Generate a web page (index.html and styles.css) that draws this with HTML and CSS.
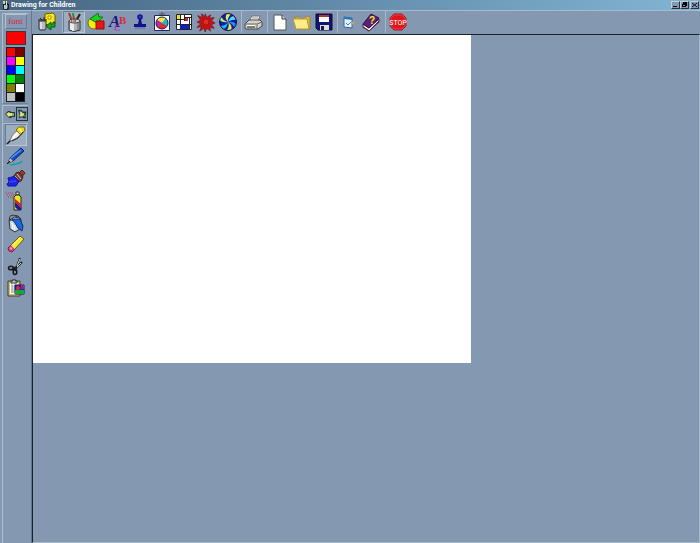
FILE: index.html
```html
<!DOCTYPE html>
<html lang="en">
<head>
<meta charset="utf-8">
<title>Drawing for Children</title>
<link rel="stylesheet" href="styles.css">
</head>
<body>
<div class="window">
  <header class="titlebar">
    <svg class="app-icon" viewBox="0 0 9 9"><path d="M2 2h6v6l-1 1H3L2 8z" fill="#1d2024"/><path d="M2 0h2v3H2z" fill="#d7cf83"/><path d="M5 0h1v4H5z" fill="#e0e8ee"/><path d="M7 1h1v2H7z" fill="#b94a3c"/><path d="M3 4h3v4H3z" fill="#b8c5c9"/><path d="M6 4h1v3H6z" fill="#536b75"/></svg>
    <h1 class="title">Drawing for Children</h1>
    <div class="window-buttons">
      <button class="win-btn" aria-label="Minimize"><svg viewBox="0 0 7 6"><path d="M1 4h4v1H1z"/></svg></button>
      <button class="win-btn" aria-label="Restore"><svg viewBox="0 0 7 6"><path d="M2 0h4v4H5V2H2zM1 2h4v3H1zM2 3v1h2V3z" fill-rule="evenodd"/></svg></button>
      <button class="win-btn close" aria-label="Close"><svg viewBox="0 0 7 6"><path d="M1 1l5 4M6 1L1 5" stroke="#111"/></svg></button>
    </div>
  </header>

  <aside class="sidebar">
    <div class="panel colour-panel">
      <button class="font-button">font</button>
      <button class="current-colour" aria-label="Current colour"></button>
      <div class="palette">
        <button class="swatch red" aria-label="Red"></button><button class="swatch maroon" aria-label="Maroon"></button>
        <button class="swatch magenta" aria-label="Magenta"></button><button class="swatch yellow" aria-label="Yellow"></button>
        <button class="swatch blue" aria-label="Blue"></button><button class="swatch cyan" aria-label="Cyan"></button>
        <button class="swatch lime" aria-label="Lime"></button><button class="swatch green" aria-label="Green"></button>
        <button class="swatch olive" aria-label="Olive"></button><button class="swatch white" aria-label="White"></button>
        <button class="swatch silver" aria-label="Silver"></button><button class="swatch black" aria-label="Black"></button>
      </div>
    </div>
    <div class="panel mode-panel">
      <button class="mode" aria-label="Previous"><svg viewBox="0 0 12 14"><path d="M1 7l3-3h2l1 1h4v5H8l-1 1H5z" fill="#1d3a34"/><path d="M2 7l3-2 1 1h3v3H6L5 10z" fill="#dfe08a"/><path d="M8 6h2v3H8z" fill="#8fae52"/></svg></button>
      <button class="mode selected" aria-label="Next"><svg viewBox="0 0 12 14"><path d="M1 2h4l2 2h4v3l-1 2 1 3H8l-2-1-4 1 1-4z" fill="#1d3a34"/><path d="M3 4h2l2 2h2l-1 3-2 1-3 0 1-3z" fill="#dfe08a"/><path d="M7 8h2v3z" fill="#8fae52"/></svg></button>
    </div>
    <div class="panel tools-panel">
      <button class="draw-tool active" aria-label="Pen"><svg viewBox="0 0 20 20"><path d="M1 19l6-6" stroke="#171717" stroke-width="1.500"/><path d="M4 15l3-6 5-4 3 4-4 4-6 3z" fill="#e9e9df" stroke="#777"/><path d="M7 13l5-6" stroke="#fff" stroke-width="2"/><path d="M10 5l3-3 5 0 1 3-4 5z" fill="#edd719" stroke="#776c12"/><path d="M13 3l3 4" stroke="#fff378" stroke-width="1.500"/><path d="M6 16l6-3 5-6" stroke="#222" fill="none"/></svg></button>
      <button class="draw-tool" aria-label="Pencil"><svg viewBox="0 0 20 20"><path d="M2 16l2-5L15 1l3 3L7 14z" fill="#164fc4" stroke="#10236c"/><path d="M5 11L15 3" stroke="#48a1ee" stroke-width="1.500"/><path d="M2 16l2-5 3 3z" fill="#d5bd86"/><path d="M1 17l3-3" stroke="#111"/><path d="M3 17q3 2 5 0 3 1 4-1 2 1 4-2" fill="none" stroke="#169fb6" stroke-width="1.500"/></svg></button>
      <button class="draw-tool" aria-label="Brush"><svg viewBox="0 0 20 20"><path d="M12 5l4-4 3 3-4 5z" fill="#a43623" stroke="#472222"/><path d="M8 7l2-3 3-1 4 5-2 4-3 1z" fill="#7c3b33" stroke="#30231e"/><path d="M9 7l4 5M11 5l4 5" stroke="#ddc8a7"/><path d="M6 8l2-1 5 5-3 5H2l-1-2 2-2-1-4z" fill="#1c25de" stroke="#1014ac"/><path d="M3 13l7-1" stroke="#303cff" stroke-width="2"/></svg></button>
      <button class="draw-tool" aria-label="Spray"><svg viewBox="0 0 20 20"><path d="M0 2h8M1 4h7M2 6h5" stroke="#d0334a" stroke-dasharray="1 1"/><path d="M10 1h3v3h-3z" fill="#ddd" stroke="#333"/><path d="M8 6l2-2h3l2 2v13H8z" fill="#f1e425" stroke="#222"/><path d="M9 8l6 5v4l-6-6z" fill="#df1b29"/><path d="M9 11l6 6v2h-3l-3-3z" fill="#1718a7"/></svg></button>
      <button class="draw-tool" aria-label="Fill"><svg viewBox="0 0 20 20"><path d="M3 7l9-4 3 3-1 10-5 3-5-3z" fill="#c8d7dc" stroke="#333"/><path d="M4 7l4-3 6 1-2 3z" fill="#eee" stroke="#333"/><path d="M6 6h8l3 7-1 5-4-3-3-5z" fill="#1a67dc" stroke="#152b7c"/><path d="M4 8Q1 0 12 3" fill="none" stroke="#333"/><path d="M6 10l1 6M8 12l1 5" stroke="#fff"/></svg></button>
      <button class="draw-tool" aria-label="Eraser"><svg viewBox="0 0 20 20"><path d="M5 10L14 1l4 3-9 10z" fill="#f8e82b" stroke="#675f13"/><path d="M7 10l8-8" stroke="#fff49a"/><path d="M2 13l3-3 4 4-3 3-3-1z" fill="#e03576" stroke="#7a2651"/><path d="M4 13l2 1" stroke="#ff9dbb" stroke-width="2"/><path d="M5 10l4 4" stroke="#ccc"/></svg></button>
      <button class="draw-tool" aria-label="Cut"><svg viewBox="0 0 20 20"><path d="M14 1l-3 8-2 5M16 5l-5 5-5 2" fill="none" stroke="#1d2329" stroke-width="2"/><path d="M14 2l-3 7M15 6l-4 4" stroke="#c5d0d8"/><ellipse cx="5" cy="11" rx="2.500" ry="1.800" fill="none" stroke="#15191d" stroke-width="1.500"/><ellipse cx="9" cy="15" rx="1.800" ry="2.500" fill="none" stroke="#15191d" stroke-width="1.500"/></svg></button>
      <button class="draw-tool" aria-label="Paste"><svg viewBox="0 0 20 20"><path d="M2 2h12v15H2z" fill="#c9c179" stroke="#463c25"/><path d="M4 4h8v11H4z" fill="#fff"/><path d="M5 7h6M5 9h6M5 11h6M5 13h6M6 4v10M9 4v10" stroke="#777" stroke-width=".6"/><path d="M5 2h2V0h2v2h2v2H5z" fill="#ccc" stroke="#333"/><path d="M9 6h9v9H9z" fill="#2428ba" stroke="#181858"/><circle cx="12" cy="9" r="2" fill="#e22926"/><path d="M15 6h3v4h-3z" fill="#9b2585"/><path d="M9 11h9v4H9z" fill="#18a838"/></svg></button>
    </div>
  </aside>

  <nav class="toolbar" aria-label="Main">
    <div class="group first">
      <button class="tool" aria-label="Change tools"><svg viewBox="0 0 20 20"><path d="M8 2l8-1 2 2v9l-8 1-2-2z" fill="#f7e916" stroke="#665d00"/><path d="M11 4h3v3h-3z" fill="#fff6a0" stroke="#b39600"/><path d="M2 9h7v8l-1 1H3l-1-1z" fill="#b8bcc2" stroke="#333"/><path d="M4 10v7" stroke="#fff"/><path d="M1 8h9M3 6l2 2M7 5v3" stroke="#222"/><path d="M18 10v5h-4v3l-5-4 5-4v2h2v-2z" fill="#13a51c" stroke="#064a0b" stroke-width=".8"/></svg></button>
    </div>
    <div class="group drawing-modes">
      <button class="tool pressed" aria-label="Draw"><svg viewBox="0 0 20 20"><path d="M5 1l3 8" stroke="#b42a26" stroke-width="2"/><path d="M9 1l1 8" stroke="#169c3a" stroke-width="2"/><path d="M16 2l-4 7" stroke="#222" stroke-width="2"/><path d="M5 9v9q5 3 11 0V9z" fill="#afb4b8" stroke="#333"/><path d="M7 11v7M9 11v8" stroke="#fff" stroke-width="1.500"/><path d="M14 11v7" stroke="#666"/><ellipse cx="10.500" cy="9" rx="5.500" ry="2" fill="#d7d9da" stroke="#333"/><path d="M7 6l1 4M10 5v5M13 5l-2 5" stroke="#a33d31"/></svg></button>
      <button class="tool" aria-label="Shapes"><svg viewBox="0 0 20 20"><circle cx="8" cy="11" r="6" fill="#f3ef14" stroke="#777000"/><path d="M4 7l8-6 1 4 4 0-6 6z" fill="#16d21d" stroke="#11771a"/><path d="M10 9h8v8h-8z" fill="#ee1515" stroke="#8d1010"/></svg></button>
      <button class="tool" aria-label="Text"><svg class="letters" viewBox="0 0 20 20"><text class="letter-a" x="1" y="15">A</text><text class="letter-b" x="11" y="12">B</text><text class="letter-c" x="6" y="19">C</text></svg></button>
      <button class="tool" aria-label="Stamps"><svg viewBox="0 0 20 20"><circle cx="10" cy="5" r="2.800" fill="#1515a5"/><path d="M9 7h2l1 5h4v3H4v-3h4z" fill="#11118b"/><path d="M5 16h10" stroke="#5d66b4"/><path d="M9 5h2" stroke="#4e56d3"/></svg></button>
      <button class="tool" aria-label="Colour effects"><svg viewBox="0 0 20 20"><path d="M10 0v3M7 2h6" stroke="#555"/><path d="M2.500 3.500h15v15h-15z" fill="#fff" stroke="#24246a"/><circle cx="10" cy="11" r="6" fill="#15afbd"/><path d="M10 11L5 8q5-6 9-1z" fill="#f2e43b"/><path d="M10 11L5 8q-3 5 1 8z" fill="#c326a0"/><path d="M10 11l-4 5q6 3 9-2z" fill="#e52925"/><path d="M10 11l4-5q3 4 1 8z" fill="#18b9cd"/><circle cx="10" cy="11" r="6" fill="none" stroke="#282854"/></svg></button>
      <button class="tool" aria-label="Pictures"><svg viewBox="0 0 20 20"><path d="M2.500 2.500h15v15h-15z" fill="#fff" stroke="#222"/><path d="M3 3h3v4H3z" fill="#f2e41d"/><path d="M11 6h3v3h-3z" fill="#dc1d20"/><path d="M6 13h9v4H6z" fill="#161bc4"/><path d="M6.500 3v10M3 7.500h7M10.500 3v6M11 5.500h7M15.500 5v12M3 12.500h15" stroke="#222" fill="none"/></svg></button>
      <button class="tool" aria-label="Effects"><svg viewBox="-1 -1 22 22"><path d="M9 1l2 4 4-3-1 4 5-1-3 4 4 2-4 2 3 4-5-1 1 4-4-3-2 4-1-4-5 3 2-5-5 1 4-4-4-2 4-2-3-5 5 2-1-4 4 3z" fill="#c51216" stroke="#681014" stroke-width=".7"/><circle cx="10" cy="10" r="3.500" fill="#e42920" stroke="#931015"/></svg></button>
      <button class="tool" aria-label="Random colours"><svg viewBox="0 0 20 20"><circle cx="10" cy="10" r="8.500" fill="#151dab"/><g fill="#e0f04e"><path d="M10 10Q6 6 9 1l4 1Q9 6 10 10z"/><path d="M10 10Q5 11 1 8l2-4Q5 9 10 10z" fill="#b6ee60"/><path d="M10 10Q9 16 5 17l-3-3Q8 14 10 10z" fill="#18c4e1"/><path d="M10 10q5 4 3 8H9q3-4 1-8z"/><path d="M10 10q6-1 8 2l-1 4q-3-5-7-6z" fill="#278fec"/><path d="M10 10q2-6 6-6l2 4q-4-1-8 2z" fill="#53dce8"/></g><circle cx="10" cy="10" r="8.500" fill="none" stroke="#101250"/></svg></button>
    </div>
    <div class="group">
      <button class="tool" aria-label="Print"><svg viewBox="0 0 20 20"><path d="M5 9l3-5h8l-2 5z" fill="#f6f6f1" stroke="#777"/><path d="M1 12l4-4h11l2 2v4l-4 3H2l-1-1z" fill="#d1d3d2" stroke="#444"/><path d="M1 12h12l5-2M13 12v5" stroke="#666" fill="none"/><path d="M3 13h8v1H3z" fill="#fff"/><path d="M3 15h8" stroke="#222"/><path d="M8 6h6M7 8h6" stroke="#999"/><path d="M11 13h2" stroke="#d4ba21"/></svg></button>
    </div>
    <div class="group">
      <button class="tool" aria-label="New"><svg viewBox="0 0 20 20"><path d="M4 3h8l4 4v11H4z" fill="#fff" stroke="#555"/><path d="M12 3v4h4" fill="#ddd" stroke="#333"/></svg></button>
      <button class="tool" aria-label="Open"><svg viewBox="0 0 20 20"><path d="M3 5h4l2 2 7-3 2 1v12H5z" fill="#d6b74b" stroke="#9f863a"/><path d="M1 7h14l2 10H4z" fill="#ffeb88" stroke="#b6973a"/></svg></button>
      <button class="tool" aria-label="Save"><svg viewBox="0 0 20 20"><path d="M2 2h16v16H4l-2-2z" fill="#121475" stroke="#090938"/><path d="M5 3h10v7H5z" fill="#fff"/><path d="M5 4h10" stroke="#b53636" stroke-width="2"/><path d="M6 13h9v5H6z" fill="#ddd"/><path d="M7 14h3v4H7z" fill="#17174e"/></svg></button>
    </div>
    <div class="group tight">
      <button class="tool" aria-label="Options"><svg viewBox="0 0 20 20"><path d="M5 5l8 1v10l-8-1z" fill="#e8f3fa" stroke="#2a68a5"/><path d="M5 5l8 1v2l-8-1z" fill="#2379bc"/><path d="M7 11l2 2 3-3" fill="none" stroke="#3b7da5"/><path d="M12 10h4l-3 3z" fill="#d4a94e"/></svg></button>
      <button class="tool" aria-label="Help"><svg viewBox="0 0 20 20"><path d="M2 12l6 4 10-9v3L8 19l-6-4z" fill="#f1eeee" stroke="#391a41"/><path d="M2 12L10 2l8 4-10 10z" fill="#592178" stroke="#37103f"/><path d="M2 15l6 4L18 9" fill="none" stroke="#651d47"/><text class="question" x="8" y="12">?</text></svg></button>
    </div>
    <div class="group">
      <button class="tool" aria-label="Stop"><svg viewBox="0 0 20 20"><path d="M6 2h8l4 4v8l-4 4H6l-4-4V6z" fill="#df161b" stroke="#a3171d"/><path d="M6 3h8l3 3v8l-3 3H6l-3-3V6z" fill="none" stroke="#f55b57" stroke-width=".6"/><text class="stop-text" x="10" y="13">STOP</text></svg></button>
    </div>
  </nav>

  <main class="workspace">
    <canvas class="drawing" width="640" height="480" aria-label="Drawing area"></canvas>
  </main>
</div>
</body>
</html>
```
FILE: styles.css
```css
* {
  box-sizing: border-box;
}

body {
  margin: 0;
  font-family: "Liberation Sans", Arial, sans-serif;
}

button {
  margin: 0;
  padding: 0;
  border: 0;
  background: none;
  color: inherit;
  font: inherit;
}

svg {
  display: block;
}

.window {
  display: grid;
  grid-template-columns: 32px minmax(0, 1fr);
  grid-template-rows: 10px 24px minmax(0, 1fr);
  min-height: 100vh;
  background: #8499b1;
}

.titlebar {
  grid-column: 1 / -1;
  display: flex;
  align-items: center;
  gap: 1px;
  padding: 0 1px;
  background: linear-gradient(90deg, #456582, #82b5d4);
}

.app-icon {
  width: 9px;
  height: 9px;
}

.title {
  flex: 1;
  margin: 0;
  color: #fff;
  font-family: Roboto, "Liberation Sans", sans-serif;
  font-size: 7px;
  font-weight: bold;
  line-height: 10px;
  white-space: nowrap;
}

.window-buttons {
  display: flex;
}

.win-btn {
  width: 9px;
  height: 8px;
  border: 1px solid;
  border-color: #c2d0dc #26333d #26333d #c2d0dc;
  background: #8499b1;
}

.win-btn svg {
  width: 7px;
  height: 6px;
}

.win-btn.close {
  margin-left: 1px;
}

.sidebar {
  grid-row: 2 / 4;
  display: flex;
  flex-direction: column;
  gap: 1px;
  padding: 2px 3px 0 2px;
  border-top: 1px solid #a9bacd;
  border-right: 1px solid #63788f;
}

.panel {
  border-top: 1px solid #aebfce;
  border-left: 1px solid #aebfce;
}

.colour-panel {
  display: flex;
  flex-direction: column;
  align-items: center;
  gap: 2px;
  padding-bottom: 1px;
  border-bottom: 1px solid #6d8298;
}

.font-button {
  width: 22px;
  height: 15px;
  border: 1px solid;
  border-color: #b1c1d0 #667c93 #667c93 #b1c1d0;
  color: #d8203c;
  font-family: "Liberation Serif", serif;
  font-size: 9px;
  line-height: 13px;
}

.current-colour {
  width: 20px;
  height: 14px;
  border: 1px solid #4b3030;
  background: #f00;
}

.palette {
  display: grid;
  grid-template-columns: repeat(2, 8px);
  grid-auto-rows: 8px;
  gap: 1px;
  padding: 1px;
  background: #182028;
}

.red { background: #f00; }
.maroon { background: #800000; }
.magenta { background: #f0f; }
.yellow { background: #ff0; }
.blue { background: #00f; }
.cyan { background: #0ff; }
.lime { background: #0f0; }
.green { background: #008000; }
.olive { background: #808000; }
.white { background: #fff; }
.silver { background: #c0c0c0; }
.black { background: #000; }

.mode-panel {
  display: flex;
  justify-content: center;
  padding: 1px 0;
}

.mode {
  width: 12px;
  height: 14px;
}

.mode svg {
  width: 100%;
  height: 100%;
}

.mode.selected {
  border: 1px solid #26333f;
}

.tools-panel {
  display: flex;
  flex: 1;
  flex-direction: column;
  align-items: center;
}

.draw-tool {
  display: grid;
  place-items: center;
  width: 22px;
  height: 22px;
}

.draw-tool svg {
  width: 20px;
  height: 20px;
}

.draw-tool.active {
  border: 1px solid;
  border-color: #687d94 #b8c8d6 #b8c8d6 #687d94;
  background: #9cadbf;
}

.toolbar {
  display: flex;
  align-items: flex-start;
  border-top: 1px solid #a9bacd;
}

.group {
  display: flex;
  align-items: center;
  height: 22px;
  padding: 0 2px 0 1px;
  border-left: 1px solid #a6b7c8;
}

.group.first {
  padding: 0 4px;
  border-left: 0;
}

.group.drawing-modes {
  padding: 0 2px 0 0;
}

.group.tight {
  padding: 0 3px 0 0;
}

.tool {
  display: grid;
  place-items: center;
  width: 22px;
  height: 22px;
}

.tool svg {
  width: 20px;
  height: 20px;
}

.tool.pressed {
  border: 1px solid;
  border-color: #687d94 #b8c8d6 #b8c8d6 #687d94;
  background: #9cadbf;
}

.letters {
  font-family: "Liberation Serif", serif;
  font-weight: bold;
}

.letter-a {
  fill: #17177e;
  font-size: 17px;
  font-style: italic;
}

.letter-b {
  fill: #d92840;
  font-size: 11px;
}

.letter-c {
  fill: #c030c5;
  font-size: 9px;
}

.question {
  fill: #ffe532;
  font-size: 10px;
  font-weight: bold;
}

.stop-text {
  fill: #fff;
  font-family: Roboto, "Open Sans", sans-serif;
  font-size: 7px;
  text-anchor: middle;
}

.workspace {
  border-top: 1px solid #17222b;
  border-left: 1px solid #17222b;
  border-right: 1px solid #a3b9ca;
  border-bottom: 1px solid #a3b9ca;
}

.drawing {
  display: block;
  width: 65.7%;
  aspect-ratio: 4 / 3;
  background: #fff;
}
```
